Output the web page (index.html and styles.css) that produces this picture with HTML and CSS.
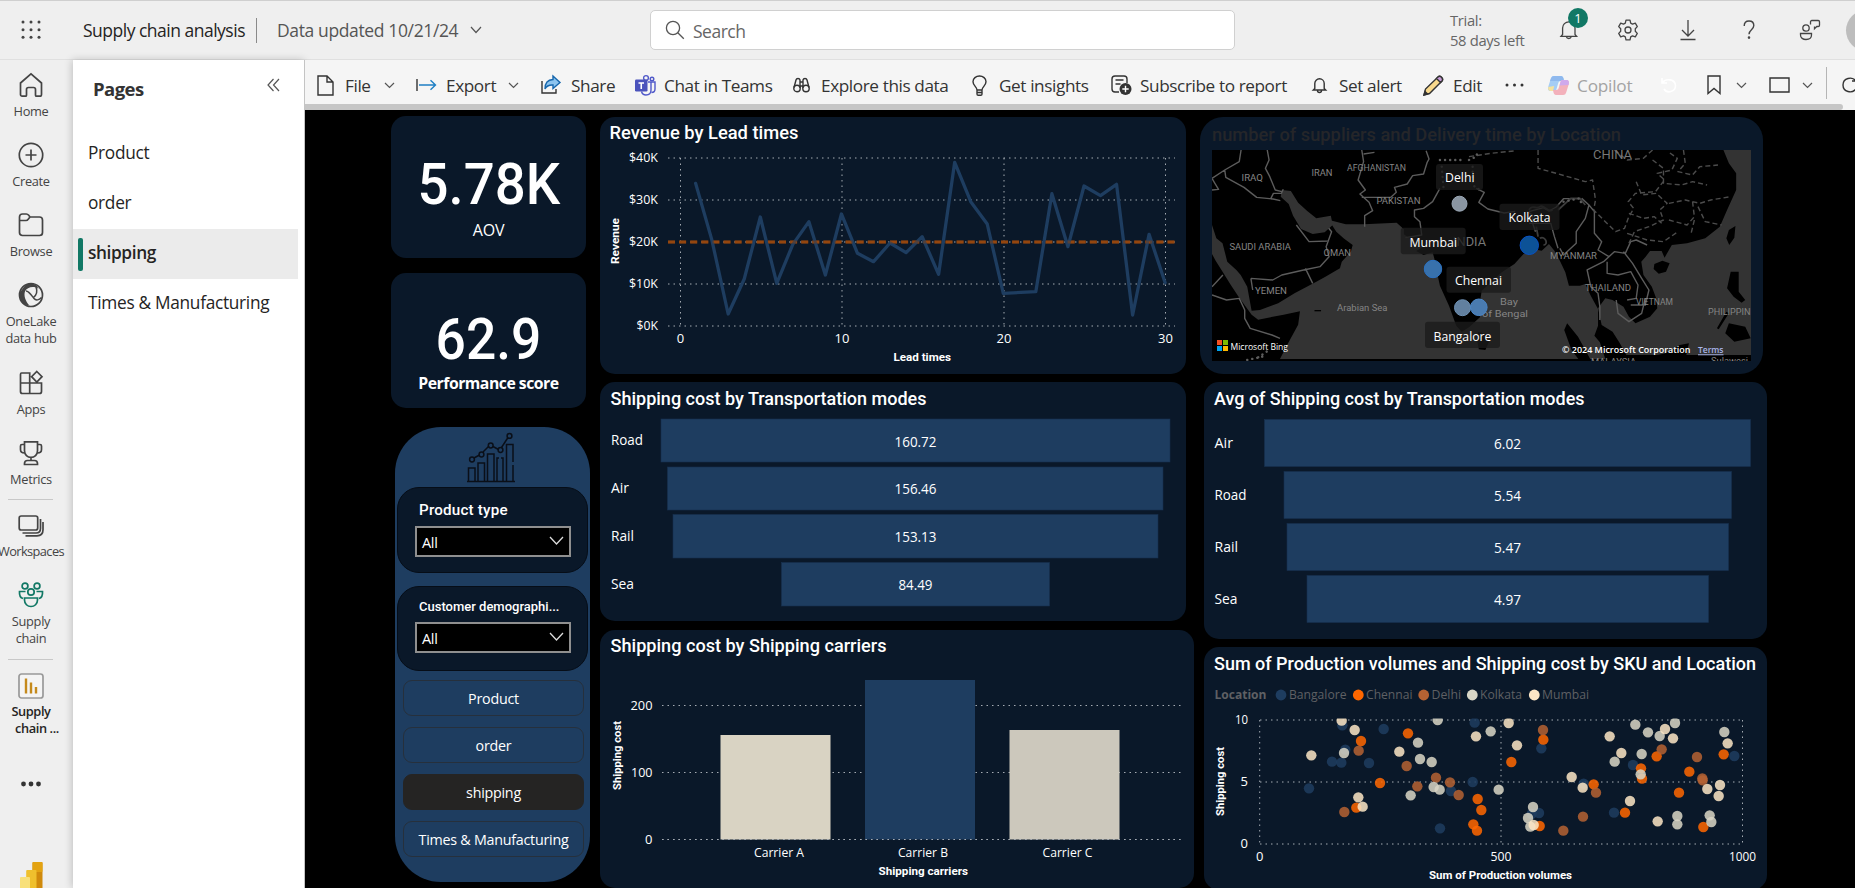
FILE: index.html
```html
<!DOCTYPE html>
<html lang="en">
<head>
<meta charset="utf-8">
<title>Supply chain analysis</title>
<link rel="stylesheet" href="styles.css">
</head>
<body>
<header class="topbar">
  <svg class="waffle" width="20" height="20" viewBox="0 0 20 20"><g fill="#444"><circle cx="2" cy="2" r="1.5"/><circle cx="10" cy="2" r="1.5"/><circle cx="18" cy="2" r="1.5"/><circle cx="2" cy="9.7" r="1.5"/><circle cx="10" cy="9.7" r="1.5"/><circle cx="18" cy="9.7" r="1.5"/><circle cx="2" cy="17.3" r="1.5"/><circle cx="10" cy="17.3" r="1.5"/><circle cx="18" cy="17.3" r="1.5"/></g></svg>
  <span class="report-name">Supply chain analysis</span>
  <span class="top-divider"></span>
  <span class="updated">Data updated 10/21/24</span>
  <svg class="chev top-chev" width="12" height="8" viewBox="0 0 12 8"><path d="M1 1l5 5.5L11 1"/></svg>
  <div class="search">
    <svg width="20" height="20" viewBox="0 0 20 20" fill="none" stroke="#555" stroke-width="1.3"><circle cx="8" cy="8" r="6.6"/><path d="M12.8 12.8l6 6"/></svg>
    <span>Search</span>
  </div>
  <div class="trial">Trial:<br>58 days left</div>
  <div class="top-icons">
    <div class="notify">
      <svg width="20" height="22" viewBox="0 0 20 22" fill="none" stroke="#444" stroke-width="1.3"><path d="M3.6 15.5V9a6.2 6.2 0 0 1 12.4 0v6.5l1.6 1.8H2z"/><path d="M7.3 17.6a2.6 2.6 0 0 0 5 0"/></svg>
      <span class="badge">1</span>
    </div>
    <svg class="gear" width="22" height="22" viewBox="0 0 22 22" fill="none" stroke="#444" stroke-width="1.3" stroke-linejoin="round"><path d="M9 1.2h4l.7 2.9 1.8 1 2.8-.9 2 3.4-2 2.1v2.6l2 2.1-2 3.4-2.8-.9-1.8 1-.7 2.9H9l-.7-2.9-1.8-1-2.8.9-2-3.4 2-2.1V9.7l-2-2.1 2-3.4 2.8.9 1.8-1z"/><circle cx="11" cy="11" r="3"/></svg>
    <svg class="download" width="16" height="22" viewBox="0 0 16 22" fill="none" stroke="#444" stroke-width="1.3"><path d="M8 1v16M2 11l6 6 6-6M.5 20.5h15"/></svg>
    <svg class="help" width="12" height="20" viewBox="0 0 12 20" fill="none" stroke="#444" stroke-width="1.4"><path d="M1.2 6C1.2 2.8 3.300 1 6 1s4.800 1.800 4.800 4.600c0 4-4.800 4.200-4.800 8.600"/><circle cx="6" cy="17.600" r=".6" fill="#444"/></svg>
    <svg class="feedback" width="22" height="22" viewBox="0 0 22 22" fill="none" stroke="#444" stroke-width="1.300"><circle cx="7" cy="9" r="3.200"/><path d="M1.500 14.500h11v1.500c0 3-2.500 4.500-5.500 4.500s-5.500-1.500-5.500-4.500zM11.500 5.500V2.800c0-.8.6-1.300 1.300-1.300h6.400c.8 0 1.300.5 1.300 1.300v3.400c0 .8-.5 1.300-1.300 1.300h-1.400l-2.300 2.200V7.500"/></svg>
    <span class="avatar"></span>
  </div>
</header>

<div class="body">
<nav class="rail">
  <a class="nav"><svg viewBox="0 0 26 26"><path d="M2.500 11L13 1.800 23.500 11v11.500c0 1-.8 1.700-1.700 1.700h-3.300c-.6 0-1-.4-1-1v-5.700c0-1.200-1-2-2-2h-5c-1 0-2 .8-2 2v5.700c0 .6-.4 1-1 1H4.200c-1 0-1.700-.7-1.700-1.700z"/></svg><span>Home</span></a>
  <a class="nav"><svg viewBox="0 0 26 26"><circle cx="13" cy="13" r="11.700"/><path d="M13 7.500v11M7.500 13h11"/></svg><span>Create</span></a>
  <a class="nav"><svg viewBox="0 0 26 26"><path d="M1.500 8.500V5c0-2 1-3 3-3h3.800c1 0 1.800.5 2.400 1.300L12 5h9.500c2 0 3 1 3 3v12.500c0 2-1 3-3 3h-17c-2 0-3-1-3-3zM1.500 8.500H8c1 0 1.600-.4 2.200-1.200L12 5"/></svg><span>Browse</span></a>
  <a class="nav nav-2"><svg viewBox="0 0 26 26"><circle cx="13" cy="13" r="11.500"/><path d="M7 3.500C9 .8 16 .4 19 4l1.500 3C16 3.500 9 5 7 9.500c-1.500 4 .5 10 4.500 14C4 23 .5 17 1.500 11z" fill="#444" stroke="none"/><path d="M8 9c3 0 6 5 8 7.500s5 1.500 7.500-1M18 5c1.500 4 .5 8-2.500 10.500" stroke-width="1.500"/></svg><span>OneLake<br>data hub</span></a>
  <a class="nav"><svg viewBox="0 0 26 26"><path d="M3.500 3h8.200v20.500H4.500c-1.200 0-2-.8-2-2V4.500c0-1 .4-1.500 1-1.500zM2.500 13h21v8.500c0 1.200-.8 2-2 2h-9.800M18.800 1.500l5.200 5.200-5.200 5.400-5.200-5.400z"/></svg><span>Apps</span></a>
  <a class="nav nav-short"><svg viewBox="0 0 26 26"><path d="M6.500 1.800h13v9c0 4-3 6.500-6.500 6.500s-6.500-2.500-6.500-6.500zM6.500 4.500H4c-.9 0-1.500.6-1.500 1.500v3.500c0 2 1.500 3.500 4 3.500M19.500 4.500H22c.9 0 1.500.6 1.500 1.500v3.500c0 2-1.500 3.500-4 3.500M13 17.500v3M6.500 24.500v-1c0-1.800 1-3 3-3h7c2 0 3 1.200 3 3v1z"/></svg><span>Metrics</span></a>
  <i class="rule"></i>
  <a class="nav nav-ws"><svg viewBox="0 0 26 26"><rect x="1.200" y="3" width="18.500" height="14" rx="2"/><path d="M4.500 20H18c3 0 4.500-1.500 4.500-4.500V6M7.500 22.800H19c4 0 6-2 6-6V9"/></svg><span>Workspaces</span></a>
  <a class="nav nav-team"><svg viewBox="0 0 26 26"><circle cx="7" cy="4" r="2.900"/><circle cx="19" cy="4" r="2.900"/><circle cx="13" cy="10" r="3.200"/><path d="M7.500 9.500H1.500c-.3 4 1 6.300 3.500 7M18.500 9.500h6c.3 4-1 6.300-3.500 7M6.500 16h13v2c0 4-3 6.500-6.500 6.500S6.500 22 6.500 18z"/></svg><span>Supply<br>chain</span></a>
  <i class="rule"></i>
  <a class="nav nav-report"><svg viewBox="0 0 26 26"><rect x="1" y="1" width="24" height="24" rx="2.500" fill="#f4f4f4"/><path d="M8 5.500v15M13 9.500v11M18 14v6.500"/></svg><span>Supply<br><b class="cut">chain ...</b></span></a>
  <svg class="more" width="20" height="6" viewBox="0 0 20 6"><g fill="#333"><circle cx="2.500" cy="3" r="2.400"/><circle cx="10" cy="3" r="2.400"/><circle cx="17.500" cy="3" r="2.400"/></g></svg>
  <svg class="pbi" width="23" height="26" viewBox="0 0 23 26"><rect x="12.500" y="0" width="10" height="30" rx="1" fill="#d08a0c"/><rect x="12.500" y="0" width="10" height="10" rx="1" fill="#e3a312"/><rect x="6.200" y="8" width="10.300" height="30" rx="1" fill="#efc02d"/><rect x="0" y="15" width="10" height="15" rx="1" fill="#f8e07a"/></svg>
</nav>

<aside class="pages">
  <div class="pages-head"><h2>Pages</h2>
    <svg width="13" height="14" viewBox="0 0 13 14" fill="none" stroke="#555" stroke-width="1.200"><path d="M6.500 1L1 7l5.500 6M12 1L6.500 7l5.500 6"/></svg>
  </div>
  <a class="page">Product</a>
  <a class="page">order</a>
  <a class="page active"><span>shipping</span></a>
  <a class="page">Times &amp; Manufacturing</a>
</aside>

<main class="report">
  <div class="toolbar">
    <div class="tool t-file"><svg width="17" height="21" viewBox="0 0 17 21"><path d="M1 1h9l6 6v13H1zM10 1v6h6"/></svg><span>File</span><svg class="chev" width="11" height="7" viewBox="0 0 11 7"><path d="M1 1l4.500 4.500L10 1"/></svg></div>
    <div class="tool t-export"><svg width="21" height="12" viewBox="0 0 21 12"><path d="M1 0v12"/><path class="blue" d="M3 6h16M14.500 1.200L19.500 6l-5 4.800"/></svg><span>Export</span><svg class="chev" width="11" height="7" viewBox="0 0 11 7"><path d="M1 1l4.500 4.500L10 1"/></svg></div>
    <div class="tool t-share"><svg width="21" height="20" viewBox="0 0 21 20"><path d="M1 6v12h14v-4"/><path d="M12 1l7 6.500-7 6V10c-4-.3-6.500 1-8 4 0-6 3-9.300 8-9.500z" fill="#8cc4f0" stroke="#1767ad"/></svg><span>Share</span></div>
    <div class="tool t-teams"><svg width="21" height="21" viewBox="0 0 21 21"><circle cx="11" cy="3" r="2.400" stroke="#5059c9"/><circle cx="17" cy="4" r="1.800" stroke="#5059c9"/><path d="M13 7h7v7c0 2-1.500 3.500-3.500 3.500M16 7v8c0 3-2 5-5 5-2.500 0-4-1.500-4.500-3.500" stroke="#5059c9"/><rect x="0" y="4.500" width="12.500" height="12" rx="1.200" fill="#4b53bc" stroke="none"/><path d="M3.500 8h5.500M6.250 8v6" stroke="#fff" stroke-width="1.600"/></svg><span>Chat in Teams</span></div>
    <div class="tool t-explore"><svg width="17" height="16" viewBox="0 0 17 16"><circle cx="4" cy="11.500" r="3.200"/><circle cx="13" cy="11.500" r="3.200"/><path d="M1 10.500L3 3c.5-2 3.500-2 4 0v8M16 10.500L14 3c-.5-2-3.500-2-4 0v8M7 5h3M7 9h3"/></svg><span>Explore this data</span></div>
    <div class="tool t-insights"><svg width="15" height="21" viewBox="0 0 15 21"><path d="M5 15c0-3-4-4.500-4-8.300C1 3.500 4 1 7.500 1S14 3.500 14 6.700C14 10.500 10 12 10 15zM5 15v4c0 .8.500 1.200 1.200 1.200h2.600c.7 0 1.200-.4 1.200-1.200v-4M5 17.500h5"/></svg><span>Get insights</span></div>
    <div class="tool t-subscribe"><svg width="21" height="20" viewBox="0 0 21 20"><path d="M8 17H4c-2 0-3-1-3-3V4c0-2 1-3 3-3h9c2 0 3 1 3 3v4M4.500 5h8M4.500 9h5"/><circle cx="14.500" cy="14" r="6" fill="#333" stroke="none"/><path d="M14.500 10.800v6.400M11.300 14h6.400" stroke="#fff"/></svg><span>Subscribe to report</span></div>
    <div class="tool t-alert"><svg width="15" height="17" viewBox="0 0 15 17"><path d="M2.800 11.500V6.500a4.700 4.700 0 0 1 9.400 0v5l1.500 1.500H1.300zM5.500 13.500a2 2 0 0 0 4 0"/></svg><span>Set alert</span></div>
    <div class="tool t-edit"><svg width="21" height="21" viewBox="0 0 21 21"><path d="M1 20l1.500-6L15 2c2-2 6 1.500 4 4L6.500 18.500z" fill="#f9d98c"/><path d="M15 2c2-2 6 1.500 4 4l-1.500 1.500-4-4z" fill="#c79bd6"/><path d="M1 20l1-3.500 2.500 2.500z" fill="#333"/></svg><span>Edit</span></div>
    <div class="tool t-more"><svg width="19" height="4" viewBox="0 0 19 4"><g fill="#333" stroke="none"><circle cx="2" cy="2" r="1.500"/><circle cx="9.500" cy="2" r="1.500"/><circle cx="17" cy="2" r="1.500"/></g></svg></div>
    <div class="tool t-copilot"><svg width="21" height="19" viewBox="0 0 21 19"><g stroke="none"><path d="M6 0h7c1.500 0 2 1 2.500 2.500L16 5h-3c-2 0-2.500 1-3 3l-1.500 5C8 15 7 15 5.500 15H3c-3 0-3.500-2-2.500-5l2-6.500C3.200 1 4 0 6 0z" fill="#a5cdf5"/><path d="M2 5L3 2.500C3.700.8 4.500 0 6 0h7c1.500 0 2 1 2.500 2.500L16 5z" fill="#8fb9ee"/><path d="M.2 11l6-1-1.200 5H3c-2.200 0-3-1.500-2.800-4z" fill="#f5e3a0"/><path d="M15 19H8c-1.500 0-2-1-2.500-2.500L5 14h3c2 0 2.500-1 3-3l1.500-5c.5-2 1.500-2 3-2H18c3 0 3.500 2 2.500 5l-2 6.500c-.7 2.500-1.500 3.500-3.500 3.500z" fill="#f3b1bb"/><path d="M12.500 6c.5-2 1.500-2 3-2H18c3 0 3.500 2 2.500 5l-9 .5z" fill="#cfa9ec"/></g></svg><span>Copilot</span></div>
    <div class="tool t-reset"><svg width="16" height="16" viewBox="0 0 16 16"><path d="M1 1v5h5M1.500 5.500C5 1 14 2 14.500 8.500 14.500 15 6 17 3 12" stroke="#fff" stroke-width="1.600"/></svg></div>
    <div class="tool t-mark"><svg width="14" height="20" viewBox="0 0 14 20"><path d="M1 1h12v17.500l-6-5-6 5z"/></svg><svg class="chev" width="11" height="7" viewBox="0 0 11 7"><path d="M1 1l4.500 4.500L10 1"/></svg></div>
    <div class="tool t-view"><svg width="21" height="16" viewBox="0 0 21 16"><path d="M1 1h19v14H1z"/></svg><svg class="chev" width="11" height="7" viewBox="0 0 11 7"><path d="M1 1l4.500 4.500L10 1"/></svg></div>
    <i class="tool-rule"></i>
    <div class="tool t-refresh"><svg width="16" height="16" viewBox="0 0 16 16"><path d="M14 4C10-1 1 1 1 8s9 9 13 4M14 0v4h-4"/></svg></div>
  </div>
  <div class="scroll"><i></i></div>

  <div class="canvas">
    <div class="col-left">
      <section class="card card-aov"><div class="value"><span>5.78K</span></div><div class="caption">AOV</div></section>
      <section class="card card-perf"><div class="value"><span>62.9</span></div><div class="caption strong">Performance score</div></section>
      <section class="filters">
        <svg class="growth" width="48" height="50" viewBox="0 0 48 50" fill="none" stroke="#0a0f18" stroke-width="1.500"><path d="M0 48.500h48M1.500 48V35h6.500v13M11 48V30h6.500v18M20.500 48V21h6.500v27M30 48V25h2M34 25h2v23M39.500 48V11.500h6.500V29M46 32v16M7 25l5.500-3M16 19l6-6M26 13.500l5.500 3M34.500 14.500l6.500-10"/><circle cx="5" cy="26.500" r="2.400"/><circle cx="14.500" cy="21.500" r="2.400"/><circle cx="23.700" cy="12.500" r="2.400"/><circle cx="33.500" cy="17" r="2.400"/><circle cx="42.500" cy="2.900" r="2.400"/></svg>
        <div class="slicer"><h3>Product type</h3><div class="select"><span>All</span><svg width="15" height="10" viewBox="0 0 15 10"><path d="M1 1l6.500 7L14 1"/></svg></div></div>
        <div class="slicer second"><h3>Customer demographi...</h3><div class="select"><span>All</span><svg width="15" height="10" viewBox="0 0 15 10"><path d="M1 1l6.500 7L14 1"/></svg></div></div>
        <a class="btn">Product</a>
        <a class="btn">order</a>
        <a class="btn on">shipping</a>
        <a class="btn">Times &amp; Manufacturing</a>
      </section>
    </div>

    <div class="col-mid">
      <section class="panel p-line">
        <svg width="586" height="257" viewBox="600 117 586 257">
          <text class="title" x="609.500" y="139" textLength="189">Revenue by Lead times</text>
          <g class="grid"><path d="M668 158H1175M668 200H1175M668 242H1175M668 284H1175M668 326H1175M680.500 158V326M842 158V326M1004 158V326M1165.500 158V326"/></g>
          <path class="ref-line" d="M668 242H1175"/>
          <g transform="translate(595 110) scale(.38265 .33333)"><polyline class="series" points="263,220 305,388 348,612 390,507 432,321 475,520 517,403 559,335 602,495 644,312 686,430 728,455 771,399 813,428 855,380 898,493 940,157 982,275 1025,342 1067,550 1152,545 1194,251 1236,410 1278,228 1321,257 1363,223 1405,615 1448,373 1490,518"/></g>
          <path class="ref-line over" d="M668 242H1175"/>
          <g class="tick end"><text x="658" y="162.300" textLength="29">$40K</text><text x="658" y="204.300" textLength="29">$30K</text><text x="658" y="246.300" textLength="29">$20K</text><text x="658" y="288.300" textLength="29">$10K</text><text x="658" y="330.300" textLength="21.500">$0K</text></g>
          <g class="tick mid"><text x="680.500" y="343">0</text><text x="842" y="343">10</text><text x="1004" y="343">20</text><text x="1165.500" y="343">30</text></g>
          <text class="axis" x="893.500" y="361" textLength="57.500">Lead times</text>
          <text class="axis" transform="translate(619 264) rotate(-90)" textLength="46">Revenue</text>
        </svg>
      </section>
      <section class="panel p-funnel">
        <svg width="586" height="239" viewBox="600 382 586 239">
          <text class="title" x="610.500" y="405" textLength="316">Shipping cost by Transportation modes</text>
          <g class="bar"><rect x="661" y="419" width="509" height="43"/><rect x="667.500" y="467" width="495.500" height="43"/><rect x="673" y="514.500" width="485" height="43.500"/><rect x="781.500" y="562.500" width="268" height="43.500"/></g>
          <g class="label"><text x="611" y="445" textLength="32">Road</text><text x="611" y="493" textLength="18">Air</text><text x="611" y="541" textLength="23">Rail</text><text x="611" y="589" textLength="23">Sea</text></g>
          <g class="label mid"><text x="915.500" y="447" textLength="42">160.72</text><text x="915.500" y="494" textLength="42">156.46</text><text x="915.500" y="542" textLength="42">153.13</text><text x="915.500" y="590" textLength="34">84.49</text></g>
        </svg>
      </section>
      <section class="panel p-bars">
        <svg width="594" height="258" viewBox="600 630 594 258">
          <text class="title" x="610.500" y="652" textLength="276">Shipping cost by Shipping carriers</text>
          <g class="grid"><path d="M662 705.500H1182M662 772.500H1182M662 839.500H1182"/></g>
          <rect x="720.500" y="735" width="110" height="104.500" fill="#d9d3c3"/><rect x="865" y="680" width="110" height="159.500" fill="#1e3d60"/><rect x="1009.500" y="730" width="110" height="109.500" fill="#ccc8bc"/>
          <g class="grid"><path d="M662 839.500H1182"/></g>
          <g class="tick end"><text x="652.500" y="710" textLength="22">200</text><text x="652.500" y="777" textLength="21.500">100</text><text x="652.500" y="844">0</text></g>
          <g class="tick mid"><text x="779" y="857" textLength="50">Carrier A</text><text x="923" y="857" textLength="50">Carrier B</text><text x="1067.500" y="857" textLength="50">Carrier C</text></g>
          <text class="axis" x="878.500" y="875" textLength="89.500">Shipping carriers</text>
          <text class="axis" transform="translate(621 790) rotate(-90)" textLength="69">Shipping cost</text>
        </svg>
      </section>
    </div>

    <div class="col-right">
      <section class="panel p-map">
        <svg width="563" height="257" viewBox="1200 117 563 257">
          <defs><clipPath id="map"><rect x="1212" y="150" width="539" height="211"/></clipPath></defs>
          <text class="title dim" x="1212" y="141" textLength="409">number of suppliers and Delivery time by Location</text>
          <g clip-path="url(#map)">
            <rect x="1212" y="150" width="539" height="211" fill="#000"/>
            <g transform="translate(1200 110) scale(.3635 .33333)">
              <g fill="#333">
                <path d="M33 345l12 40 17 15 13 55 25 25 12 15 18 35 5 30 7 42 23-2 50-20 45-30 60-35 25-15 40-25 5-20 25-30 5-20-25-20-20-20-12-20-5-14 43 12 50 0 90-5 20 20 0 15 10 8 22 18 20 12-18 12 20 12 25-8 5 20 5 30 10 50 25 60 20 60 15 18 20-13 30-30 0-45 5-35 55-55 35-25 25-30 25-15 25 5 20-20 15 20 15 30 15 35 10 40 30 0 15-5 15 35 20 40 0 50-10 30 15 20 15 50H220l20-43 30-60 5-40-45 10-70 15-18-15-15-22-20-30-24-40-20-35-20-35-10-20z"/>
                <path d="M225 240l25 3 20 35 25 25 25 22 40-8 5 28-22 22-33 5-32-15-22-40-12-35-22-22z"/>
                <path d="M1440 120l15 40 20 30 0 50-25 60-20 50-40 35-50 15-42 5-20 38-8-20-32 0-12 17-12 15 6 40 23 35 12 35 3 30-20 25-40 20-18-20-15-30-30-20-20-5-20 30 10 50 30 20 20 35 18 35H1530V110z"/>
              </g>
              <g fill="#000">
                <path d="M1250 462l22-10 20 8-10 25-20 6-14-14zM1455 360l18-12-3 35-14 22-8-20zM1460 485l22 0 0 60 18 25-10 8-22-18-18-25zM1448 605l-26 50 5 3 28-48zM765 665l15 5 15 25-10 25-18-2-4-25zM1455 640l45 10 15 35-45 10-25-25zM1010 640l30 40 40 80h-30l-28-40-20-60zM1220 745l60-15 40-25 25-5-12 60h-115z"/>
                <path d="M315 600h18v4h-18z"/>
              </g>
              <g class="border">
                <path d="M33 205l35-25 40-25 5-35M68 180l3 22 50 30 35 30 45 5 20 5M33 240l18-2-10-18-8-15M195 265l7-15 22 0 5-12M185 120l5 30-10 25 12 25 15 40 18 5M445 120l5 35-15 55 20 30-15 12 25 25 10 25-22 15 0 33M445 262l80 0 15-15-5-15 35-10 15-25 30-5 10-35 5-10-8-25M450 132l30-5M660 235l-20 40-25 20-25 5 0 20 15 15 5 40-45 8M760 235l22 12-15 30 25 20 45 12 30-5M905 305l40-12 15 10 20-12 20-25 45 0M900 305l15 10 0 25 8 25M905 340h60l10 40 10 35M1050 265l20 20-10 40-25 40 0 35-35 35-10-20M1070 285l15 20 0 65 20 25-10 25 30 20M1125 440l-15 15-45 25 10 50 20 20 5 40 0 40M1125 440l15-15 30 5 15-35 15-5 30 15M1165 425l25 35 25 45 20 35-10 45-40 0M1120 455l0 35 30 5 35-10 20 40-5 40-25 5M1145 570l5 40 30 25 35-25 10-45M140 505l60 5 25-15 60-15 45-10 25-30-8-30 15-45-8-10M290 475l20 45M33 555l40 15 35-5 15 35 0 25 15 30 60 20 22 10M33 530l30-35M265 345l35 50 55-2M145 540l-5-35"/>
              </g>
              <g class="border coast"><path d="M905 300c10-20 20 0 30-10s20 20 35 10M985 300l20-20 15-15 25 0 15 20M925 350l5 30M935 385c15-10 25 20 10 20"/></g>
              <g class="border dash">
                <path d="M740 140l60-10 70-8M930 120l0 55 50 15 80 25 20-5 8 60-5 30 60 65 25-10 10-30 15-30-15-20 20-25 55-5 25-35-20-20 40-10 15-35-25-20M1140 120l35 30 45-5 25-25M1245 150l30 25 0 45 50 5 30-10 40 10M1200 215l15 40 40-5 30 30-20 20 10 30-40 20-40 15-15 35M1290 280l45-10 40 10 30-10 55-10M1290 330l50 15 20-25-5-45M1360 330l-10 45M1370 290l20 45 45 10M1330 120l5 40-20 25 40 10 20-25 50-5M1180 310l40 15 30-5 20 20M1175 370l55 20 45 5 40-30"/>
              </g>
              <g class="border dots"><path d="M660 150h60M740 150l20-10 5-20M665 170l5 65M750 170l0 55 20 15M1000 275l45-10 5 20M130 750l50-12M160 742l30-22"/></g>
            </g>
            <g class="geo">
              <text x="1241.500" y="180.700" textLength="21.500">IRAQ</text><text x="1311.500" y="176" textLength="21">IRAN</text><text x="1347" y="171.300" textLength="59">AFGHANISTAN</text><text x="1376.500" y="204.300" textLength="44">PAKISTAN</text><text x="1229.500" y="250" textLength="61.500">SAUDI ARABIA</text><text x="1323.500" y="256.300" textLength="27.500">OMAN</text><text x="1255" y="293.700" textLength="32">YEMEN</text><text x="1337" y="311.300" textLength="50.500">Arabian Sea</text><text class="big" x="1593" y="158.700" textLength="39">CHINA</text><text class="big" x="1453" y="246" textLength="33">INDIA</text><text x="1550" y="258.700" textLength="47">MYANMAR</text><text x="1585" y="291" textLength="46">THAILAND</text><text x="1636" y="304.500" textLength="37">VIETNAM</text><text x="1708" y="315.300" textLength="53">PHILIPPINES</text><text x="1500" y="304.700" textLength="18">Bay</text><text x="1482" y="317" textLength="46">of Bengal</text><text x="1591" y="365" textLength="45">MALAYSIA</text><text x="1711" y="363.500" textLength="37">Sulawesi</text>
            </g>
          </g>
          <g stroke-width="1"><circle cx="1459.500" cy="203.700" r="7.500" fill="#8a95a1" stroke="#9aa7b5"/><circle cx="1529.300" cy="245.300" r="9.200" fill="#0c5297" stroke="#0a52c4"/><circle cx="1433" cy="269" r="8.700" fill="#3871ac" stroke="#2c73c4"/><circle cx="1462.500" cy="307.700" r="8" fill="#62809f" stroke="#6d90b3"/><circle cx="1478.800" cy="307.300" r="8.300" fill="#4a7bb0" stroke="#4a86c8"/></g>
          <g fill="#1b1b1b" fill-opacity=".78"><rect x="1436" y="164" width="47" height="26" rx="3"/><rect x="1499.500" y="203.700" width="60" height="26.300" rx="3"/><rect x="1400.700" y="227.700" width="65" height="26.500" rx="3"/><rect x="1446.500" y="266.700" width="64.500" height="26" rx="3"/><rect x="1425" y="321.700" width="75" height="26.300" rx="3"/></g>
          <g class="city"><text x="1445" y="182" textLength="29.500">Delhi</text><text x="1508.500" y="222" textLength="42">Kolkata</text><text x="1409.500" y="247" textLength="47.500">Mumbai</text><text x="1455" y="285" textLength="47">Chennai</text><text x="1433.500" y="341" textLength="58">Bangalore</text></g>
          <rect x="1217" y="340" width="5" height="5" fill="#f25022"/><rect x="1223" y="340" width="5" height="5" fill="#7fba00"/><rect x="1217" y="346" width="5" height="5" fill="#00a4ef"/><rect x="1223" y="346" width="5" height="5" fill="#ffb900"/>
          <text class="bing" x="1230.500" y="349.500" textLength="57.500">Microsoft Bing</text>
          <text class="bing copy" x="1562" y="353.300" textLength="128.500">© 2024 Microsoft Corporation</text>
          <text class="bing copy terms" x="1698" y="353.300" textLength="25.500">Terms</text>
        </svg>
      </section>
      <section class="panel p-avg">
        <svg width="563" height="257" viewBox="1204 382 563 257">
          <text class="title" x="1214" y="405" textLength="370.500">Avg of Shipping cost by Transportation modes</text>
          <g class="bar"><rect x="1264.500" y="419.500" width="486" height="47"/><rect x="1284" y="471.500" width="447.500" height="47"/><rect x="1287" y="523.500" width="441.500" height="47"/><rect x="1307" y="575.500" width="401.500" height="47"/></g>
          <g class="label"><text x="1214.500" y="448" textLength="18.500">Air</text><text x="1214.500" y="500" textLength="32">Road</text><text x="1214.500" y="552" textLength="23.500">Rail</text><text x="1214.500" y="604" textLength="23">Sea</text></g>
          <g class="label mid"><text x="1507.500" y="449" textLength="27">6.02</text><text x="1507.500" y="501" textLength="27">5.54</text><text x="1507.500" y="553" textLength="27">5.47</text><text x="1507.500" y="605" textLength="27">4.97</text></g>
        </svg>
      </section>
      <section class="panel p-scatter">
        <svg width="563" height="243" viewBox="1204 647 563 243">
          <text class="title" x="1214" y="670" textLength="542">Sum of Production volumes and Shipping cost by SKU and Location</text>
          <g class="legend"><text class="b" x="1214.500" y="699" textLength="52">Location</text><text x="1289" y="699" textLength="57.500">Bangalore</text><text x="1366" y="699" textLength="46.500">Chennai</text><text x="1431.500" y="699" textLength="29.500">Delhi</text><text x="1480" y="699" textLength="42">Kolkata</text><text x="1542" y="699" textLength="47">Mumbai</text></g>
          <circle cx="1281" cy="695" r="5.400" fill="#1e3d60"/><circle cx="1358.300" cy="695" r="5.400" fill="#ff6700"/><circle cx="1423.700" cy="695" r="5.400" fill="#b56233"/><circle cx="1472.300" cy="695" r="5.400" fill="#d9d5c5"/><circle cx="1534.300" cy="695" r="5.400" fill="#fce5c5"/>
          <g class="grid"><path d="M1260 720H1743M1260 782H1743M1260 844H1743M1259.700 720V844M1501 720V844M1742.500 720V844"/></g>
          <clipPath id="plot"><rect x="1250" y="718.500" width="505" height="130"/></clipPath>
          <g clip-path="url(#plot)"><g id="pts" transform="translate(1195 640) scale(.333333)"></g></g>
          <g class="tick end"><text x="1248" y="724" textLength="13">10</text><text x="1248" y="786">5</text><text x="1248" y="848">0</text></g>
          <g class="tick mid"><text x="1259.700" y="861">0</text><text x="1501" y="861" textLength="21">500</text><text x="1742.500" y="861" textLength="27">1000</text></g>
          <text class="axis" x="1429" y="879" textLength="143">Sum of Production volumes</text>
          <text class="axis" transform="translate(1224 816) rotate(-90)" textLength="69">Shipping cost</text>
        </svg>
      </section>
    </div>
  </div>
</main>
</div>
<script src="chart.js"></script>
</body>
</html>
```

FILE: styles.css
```css
* { box-sizing: border-box; }
html, body { margin: 0; height: 888px; overflow: hidden; }
body { font-family: "Open Sans", "Noto Sans", sans-serif; color: #252423; background: #efefef; }
svg { display: block; flex: none; overflow: visible; }

.topbar { height: 60px; display: flex; align-items: center; background: #efefef; border-top: 1px solid #cfcfcf; border-bottom: 1px solid #e0e0e0; white-space: nowrap; overflow: hidden; }
.topbar > * { flex: none; }
.waffle { margin-left: 21px; }
.report-name { margin-left: 42px; width: 173px; font-size: 17.500px; letter-spacing: -.5px; }
.top-divider { width: 1px; height: 25px; background: #8a8a8a; }
.updated { margin-left: 20px; width: 193px; font-size: 17.500px; letter-spacing: -.37px; color: #555; }
.chev { fill: none; stroke: #555; stroke-width: 1.200; }
.search { margin-left: 168px; width: 585px; height: 40px; background: #fff; border: 1px solid #d0d0d0; border-radius: 5px; display: flex; align-items: center; padding: 2px 0 0 14px; gap: 8px; color: #666; font-size: 17.500px; letter-spacing: -.5px; }
.search svg { margin-top: -2px; }
.trial { margin-left: 215px; width: 106px; font-size: 14.800px; line-height: 20px; letter-spacing: -.35px; color: #666; }
.top-icons { display: flex; align-items: center; }
.notify { position: relative; width: 20px; margin-left: 3px; }
.badge { position: absolute; left: 9px; top: -11px; width: 20px; height: 20px; border-radius: 50%; background: #117865; color: #fff; font-size: 13px; line-height: 20px; text-align: center; }
.gear { margin-left: 38px; }
.download { margin-left: 41px; }
.help { margin-left: 47px; }
.feedback { margin-left: 44px; }
.avatar { flex: none; margin-left: 25px; width: 41px; height: 41px; border-radius: 50%; background: #bdbdbd; }

.body { display: flex; height: 828px; }
.rail { flex: none; width: 73px; padding-top: 12px; background: #efefef; display: flex; flex-direction: column; overflow: hidden; }
.nav { width: 62px; height: 70px; flex: none; display: flex; flex-direction: column; align-items: center; gap: 5px; font-size: 12.800px; line-height: 17px; letter-spacing: -.3px; color: #444; text-align: center; white-space: nowrap; }
.nav svg { width: 26px; height: 26px; fill: none; stroke: #444; stroke-width: 1.700; }
.nav-2 { height: 88px; }
.nav-short { height: 59px; }
.nav-ws { margin-top: 13px; height: 69px; gap: 4px; letter-spacing: -.6px; }
.nav-team { height: 77px; }
.nav-team svg { stroke: #117865; }
.nav-report { margin-top: 13px; height: 108px; gap: 4px; font-weight: 600; letter-spacing: -.4px; color: #252423; }
.nav-report rect { stroke: #999; }
.nav-report path { stroke: #c58a1c; stroke-width: 2.400; }
.cut { font-weight: 600; margin-left: 12px; }
.rule { flex: none; width: 45px; height: 1px; margin-left: 8px; background: #c8c8c8; }
.more { margin-left: 21px; }
.pbi { margin: 75px 0 0 20px; }

.pages { flex: none; width: 232px; background: #fff; border-right: 1px solid #c4c4c4; box-shadow: -1px 0 8px rgba(0, 0, 0, .2); }
.pages-head { height: 69px; display: flex; padding: 15px 24px 0 20px; justify-content: space-between; }
.pages-head svg { margin-top: 3px; }
.pages h2 { margin: 0; font-size: 18.500px; line-height: 28px; font-weight: 700; letter-spacing: -.55px; color: #333; }
.page { display: flex; align-items: center; height: 50px; margin-right: 6px; padding: 0 0 3px 15px; font-size: 17.300px; letter-spacing: -.3px; white-space: nowrap; }
.page.active { background: #ebebeb; font-weight: 600; padding-left: 5px; letter-spacing: -.4px; }
.page.active::before { content: ""; width: 5px; height: 33px; border-radius: 2px; background: #117865; margin: 3px 5px 0 0; }

.report { flex: 1; min-width: 0; overflow: hidden; }
.toolbar { height: 44px; display: flex; align-items: center; background: #f5f5f5; padding: 6px 0 0 12px; }
.tool { flex: none; display: flex; align-items: center; white-space: nowrap; font-size: 17.200px; letter-spacing: -.4px; color: #333; }
.tool svg { fill: none; stroke: #333; stroke-width: 1.400; }
.tool .blue { stroke: #1f7fc4; }
.tool .chev { stroke: #555; stroke-width: 1.200; }
.t-file { width: 99px; } .t-file span { margin-left: 11px; width: 39px; }
.t-export { width: 125px; } .t-export span { margin-left: 9px; width: 62px; }
.t-share { width: 94px; } .t-share span { margin-left: 9px; }
.t-teams { width: 158px; } .t-teams span { margin-left: 8px; }
.t-explore { width: 179px; } .t-explore span { margin-left: 11px; }
.t-insights { width: 139px; } .t-insights span { margin-left: 12px; }
.t-subscribe { width: 201px; } .t-subscribe span { margin-left: 8px; }
.t-alert { width: 111px; } .t-alert span { margin-left: 12px; }
.t-edit { width: 82px; } .t-edit span { margin-left: 9px; }
.t-more { width: 43px; }
.t-copilot { width: 113px; color: #a3a3a3; } .t-copilot span { margin-left: 8px; letter-spacing: -.2px; }
.t-reset { width: 46px; }
.t-mark { width: 62px; } .t-mark .chev { margin-left: 15px; }
.t-view { width: 57px; } .t-view .chev { margin-left: 12px; }
.tool-rule { flex: none; width: 1px; height: 32px; margin: -5px 15px 0 0; background: #b5b5b5; }
.scroll { height: 6px; background: #f5f5f5; }
.scroll i { display: block; width: 1538px; height: 6px; background: #c6c6c6; border-radius: 0 3px 3px 0; }

.canvas { height: 778px; background: #000; padding: 6px 0 0 86px; display: flex; overflow: hidden; }
.col-left { flex: none; width: 209px; }
.card { width: 195px; border-radius: 15px; background: #0a1829; color: #fff; text-align: center; overflow: hidden; }
.card-aov { height: 142px; padding-top: 34px; }
.card-perf { height: 135px; margin-top: 15px; padding-top: 32px; }
.value { font-family: Roboto, sans-serif; font-weight: 500; font-size: 58px; line-height: 68px; }
.value span { display: inline-block; transform: scaleX(.94); }
.card-perf .value span { transform: scaleX(.92); }
.caption { margin-top: 1px; font-size: 16px; line-height: 22px; letter-spacing: -.2px; }
.card-perf .caption { margin-top: -1px; font-size: 15.800px; }
.strong { font-weight: 700; letter-spacing: -.5px; }
.filters { margin: 19px 0 0 4px; width: 195px; height: 455px; padding-top: 6px; background: #1e3d60; border-radius: 46px; display: flex; flex-direction: column; align-items: center; }
.growth { margin-left: -3px; }
.slicer { flex: none; width: 191px; height: 86px; margin-top: 4px; padding: 13px 16px 0 17px; border: 1px solid #060d17; border-radius: 22px; background: #0a1829; color: #fff; }
.slicer h3 { margin: 0 0 7px 4px; font: 500 15.200px/18px Roboto, sans-serif; letter-spacing: .2px; white-space: nowrap; }
.slicer.second { margin-top: 13px; height: 85px; padding-top: 11px; }
.slicer.second h3 { margin-bottom: 6px; font-size: 13px; letter-spacing: 0; line-height: 18px; }
.select { height: 31px; border: 2px solid #8f8f8f; background: #000; display: flex; align-items: center; justify-content: space-between; padding: 2px 5px 0 5px; font-size: 14.500px; letter-spacing: -.3px; }
.select svg { fill: none; stroke: #ddd; stroke-width: 1.300; margin-top: -3px; }
.btn { flex: none; width: 181px; height: 36px; margin: 11px 0 0 2px; border: 1px solid #26303c; border-radius: 9px; color: #fff; font-size: 14.300px; line-height: 35px; letter-spacing: -.25px; text-align: center; }
.slicer + .btn { margin-top: 9px; }
.btn.on { background: #252423; border-color: #252423; }

.col-mid { flex: none; width: 604px; padding-top: 1px; }
.col-right { flex: none; padding-top: 1px; }
.panel { background: #0a1829; border-radius: 15px; overflow: hidden; }
.p-line { width: 586px; height: 257px; }
.p-funnel { width: 586px; height: 239px; margin-top: 8px; }
.p-bars { width: 594px; height: 258px; margin-top: 9px; }
.p-map { width: 563px; height: 257px; border-radius: 23px; margin-left: -4px; }
.p-avg { width: 563px; height: 257px; margin-top: 8px; }
.p-scatter { width: 563px; height: 243px; margin-top: 8px; }

text { font-family: "Open Sans", "Noto Sans", sans-serif; fill: #fff; }
.title { font: 500 17.500px Roboto, sans-serif; }
.title.dim { fill: #252629; font-size: 17.500px; }
.tick text { font-size: 13px; }
.end text { text-anchor: end; }
.mid text { text-anchor: middle; }
.label text { font-size: 14px; }
.axis { font: 700 11.500px Roboto, "Open Sans", sans-serif; }
.bar rect { fill: #1e3d60; stroke: #17314f; stroke-width: .6; }
.grid path { fill: none; stroke: #a4abb3; stroke-width: 1; stroke-dasharray: 1.500 4; }
.ref-line { stroke: #94460f; stroke-width: 3; stroke-dasharray: 7 4.100; }
.ref-line.over { opacity: .45; }
.series { fill: none; stroke: #1e3d60; stroke-width: 3.300; stroke-linejoin: round; stroke-linecap: round; vector-effect: non-scaling-stroke; }
.border path { fill: none; stroke: #5c5c5c; stroke-width: 1.400; stroke-linejoin: round; vector-effect: non-scaling-stroke; }
.border.dash path { stroke: #4c4c4c; stroke-dasharray: 5 3; }
.border.dots path { stroke-width: 2.400; stroke-dasharray: .1 5; stroke-linecap: round; }
.border.coast path { stroke: #3c3c3c; stroke-width: 1.800; }
.geo text { font: 400 9.400px Roboto, sans-serif; fill: #858585; }
.geo text.big { font-size: 12.500px; fill: #777; }
.city text { font-size: 12.800px; }
.bing { font-size: 9.800px; }
.copy { font-size: 9.500px; font-weight: 600; }
.terms { fill: #a8b4e8; text-decoration: underline; }
.legend text { font-size: 12.800px; fill: #5f6064; }
.legend .b { font-weight: 700; }
```

FILE: chart.js
```js
// Scatter points per location: [x, y] pairs in plot units.
var series = [
  { color: "#1e3d60", pts: [[442,256],[566,267],[451,329],[411,365],[439,368],[522,369],[342,445],[839,248],[833,426],[768,453],[735,565],[1039,325],[1314,375],[1166,431],[1032,519],[1010,522],[1257,518],[1618,348]] },
  { color: "#ff6700", pts: [[498,303],[639,280],[555,429],[484,503],[848,477],[859,510],[835,553],[846,572],[949,366],[1045,299],[1196,433],[1034,558],[1290,518],[1338,385],[1341,416],[1385,349],[1452,458],[1483,395],[1586,343],[1525,561]] },
  { color: "#b56233", pts: [[491,332],[635,378],[448,516],[667,439],[723,413],[765,427],[791,465],[1044,270],[1203,458],[1164,530],[1105,572],[1400,328],[1506,351],[1522,415],[1523,421]] },
  { color: "#d9d5c5", pts: [[447,339],[728,240],[669,308],[675,357],[710,366],[647,466],[716,441],[734,449],[887,274],[911,449],[1014,501],[999,534],[1006,560],[1321,254],[1359,277],[1394,288],[1440,249],[1340,342],[1259,365],[1337,403],[1588,276],[1447,528],[1447,553],[1544,526],[1549,546]] },
  { color: "#fce5c5", pts: [[440,242],[479,270],[349,346],[490,472],[503,500],[613,335],[843,289],[941,249],[966,316],[1130,411],[1163,443],[1016,555],[1244,289],[1279,339],[1305,483],[1410,267],[1434,295],[1388,544],[1598,310],[1537,447],[1575,435],[1571,468]] }
];
var plot = document.getElementById("pts");
series.forEach(function (s) {
  s.pts.forEach(function (p) {
    var c = document.createElementNS("http://www.w3.org/2000/svg", "circle");
    c.setAttribute("cx", p[0]);
    c.setAttribute("cy", p[1]);
    c.setAttribute("r", 15.6);
    c.setAttribute("fill", s.color);
    c.setAttribute("fill-opacity", 0.86);
    plot.appendChild(c);
  });
});
document.querySelectorAll("text[textLength]").forEach(function (t) {
  t.setAttribute("lengthAdjust", "spacingAndGlyphs");
});
```
